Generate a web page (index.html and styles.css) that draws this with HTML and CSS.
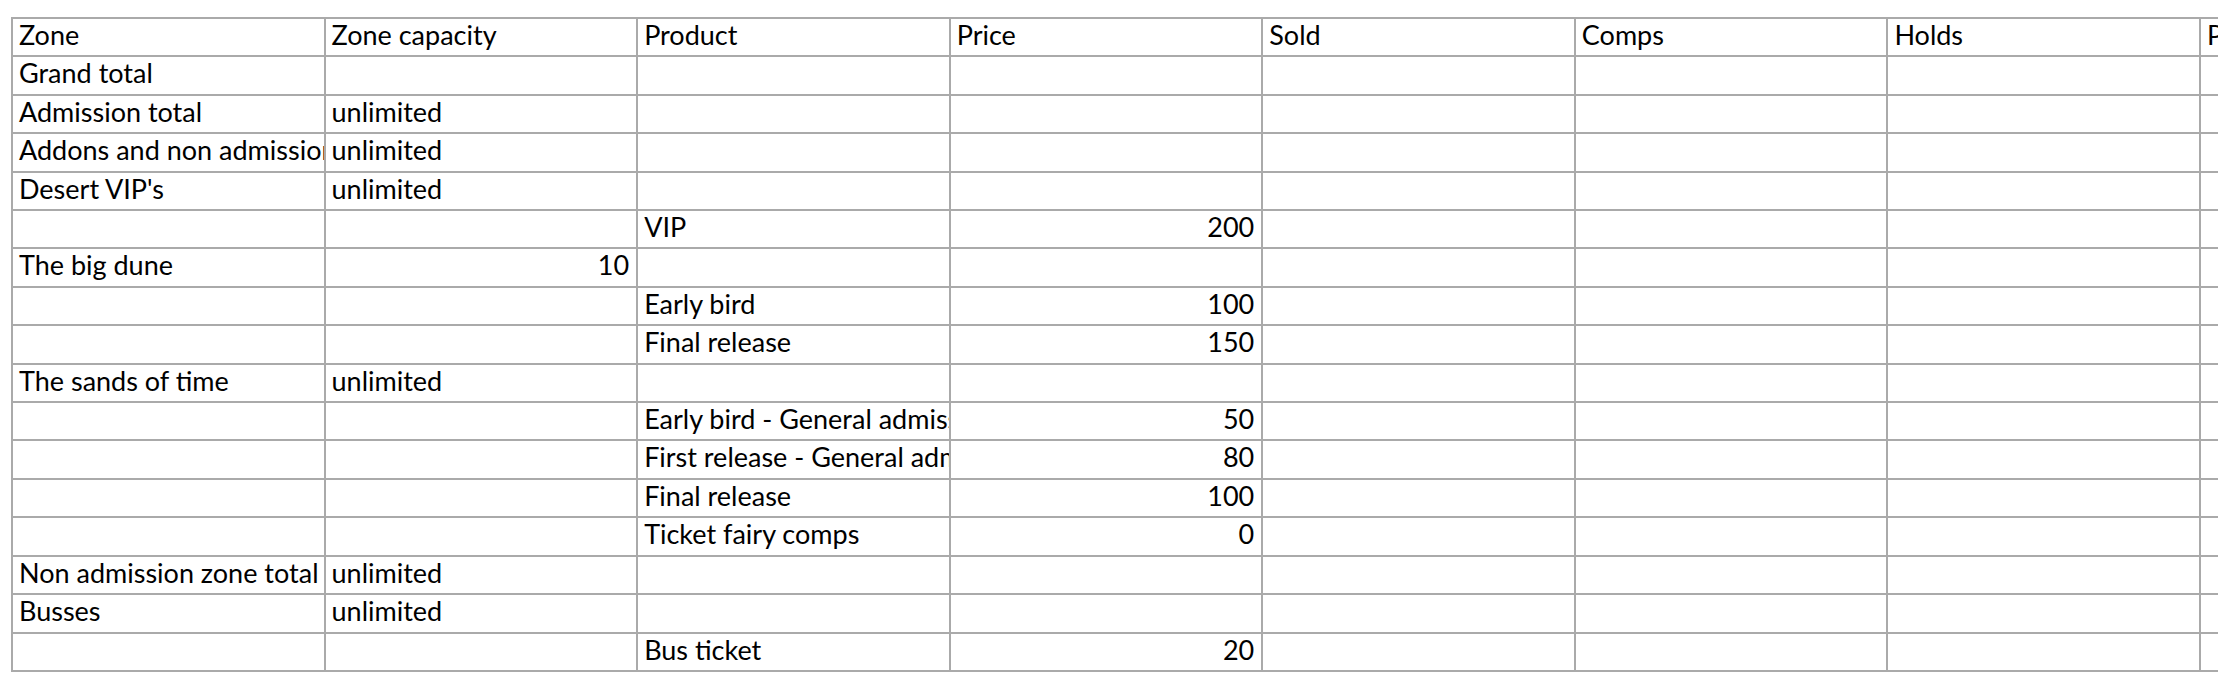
FILE: index.html
```html
<!DOCTYPE html>
<html lang="en">
<head>
<meta charset="utf-8">
<title>Zones report</title>
<link rel="stylesheet" href="styles.css">
</head>
<body>
<div class="page">
<table class="sheet">
  <thead>
    <tr><th>Zone</th><th>Zone capacity</th><th>Product</th><th>Price</th><th>Sold</th><th>Comps</th><th>Holds</th><th>P</th></tr>
  </thead>
  <tbody>
    <tr><td>Grand total</td><td></td><td></td><td></td><td></td><td></td><td></td><td></td></tr>
    <tr><td>Admission total</td><td>unlimited</td><td></td><td></td><td></td><td></td><td></td><td></td></tr>
    <tr><td>Addons and non admission zone total</td><td>unlimited</td><td></td><td></td><td></td><td></td><td></td><td></td></tr>
    <tr><td>Desert VIP's</td><td>unlimited</td><td></td><td></td><td></td><td></td><td></td><td></td></tr>
    <tr><td></td><td></td><td>VIP</td><td class="num">200</td><td></td><td></td><td></td><td></td></tr>
    <tr><td>The big dune</td><td class="num">10</td><td></td><td></td><td></td><td></td><td></td><td></td></tr>
    <tr><td></td><td></td><td>Early bird</td><td class="num">100</td><td></td><td></td><td></td><td></td></tr>
    <tr><td></td><td></td><td>Final release</td><td class="num">150</td><td></td><td></td><td></td><td></td></tr>
    <tr><td>The sands of time</td><td>unlimited</td><td></td><td></td><td></td><td></td><td></td><td></td></tr>
    <tr><td></td><td></td><td>Early bird - General admission</td><td class="num">50</td><td></td><td></td><td></td><td></td></tr>
    <tr><td></td><td></td><td>First release - General admission</td><td class="num">80</td><td></td><td></td><td></td><td></td></tr>
    <tr><td></td><td></td><td>Final release</td><td class="num">100</td><td></td><td></td><td></td><td></td></tr>
    <tr><td></td><td></td><td>Ticket fairy comps</td><td class="num">0</td><td></td><td></td><td></td><td></td></tr>
    <tr><td>Non admission zone total</td><td>unlimited</td><td></td><td></td><td></td><td></td><td></td><td></td></tr>
    <tr><td>Busses</td><td>unlimited</td><td></td><td></td><td></td><td></td><td></td><td></td></tr>
    <tr><td></td><td></td><td>Bus ticket</td><td class="num">20</td><td></td><td></td><td></td><td></td></tr>
  </tbody>
</table>
</div>
</body>
</html>
```
FILE: styles.css
```css
html, body {
  margin: 0;
  padding: 0;
  background: #ffffff;
  overflow: hidden;
}

.page {
  padding: 17px 0 0 11px;
}

.sheet {
  border-collapse: separate;
  border-spacing: 0;
  table-layout: fixed;
  width: 2502.56px;
  border-top: 2px solid #aaaaaa;
  border-left: 2px solid #aaaaaa;
  font-family: Lato, "Open Sans", sans-serif;
  font-size: 27px;
  color: #000000;
}

.sheet th,
.sheet td {
  box-sizing: border-box;
  width: 312.57px;
  height: 38.41px;
  padding: 2px 7px 0 6px;
  border-right: 2px solid #aaaaaa;
  border-bottom: 2px solid #aaaaaa;
  line-height: 27px;
  font-weight: normal;
  text-align: left;
  vertical-align: top;
  white-space: nowrap;
  overflow: hidden;
  text-overflow: clip;
}

.sheet td.num {
  text-align: right;
}
```
